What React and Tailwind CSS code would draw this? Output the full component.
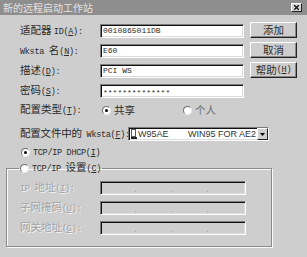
import React from "react";

const E = ({ children }) => <span className="font-['Liberation_Mono',monospace] text-[8.5px] tracking-[-0.3px]">{children}</span>;

function Sunken({ className = "", children }) {
  return (
    <div className={`border border-t-[#7c7c7c] border-l-[#7c7c7c] border-b-white border-r-white shadow-[inset_1px_1px_0_#111,inset_-1px_-1px_0_#dcdcdc] ${className}`}>
      {children}
    </div>
  );
}

function Btn({ children }) {
  return (
    <div className="w-[47px] h-[16px] flex items-center justify-center border border-t-white border-l-white border-b-[#222] border-r-[#222] shadow-[inset_-1px_-1px_0_#888] bg-[#cecece]">
      {children}
    </div>
  );
}

function Radio({ on }) {
  return (
    <span className="w-[9px] h-[9px] shrink-0 rounded-full bg-white border border-t-[#6e6e6e] border-l-[#6e6e6e] border-b-[#e8e8e8] border-r-[#e8e8e8] flex items-center justify-center">
      {on && <span className="w-[3px] h-[3px] rounded-full bg-black" />}
    </span>
  );
}

function Row({ label, children }) {
  return (
    <div className="flex items-center h-[14px]">
      <div className="w-[100px] pl-[20px] whitespace-nowrap">{label}</div>
      {children}
    </div>
  );
}

function IpBox() {
  return (
    <Sunken className="w-[146px] h-[14px] flex bg-[#cecece]">
      {[0, 1, 2, 3].map((i) => (
        <div key={i} className="flex-1 flex items-end justify-end pb-[2px] pr-[1px]">
          {i < 3 && <span className="w-[1px] h-[1px] bg-[#a8a8a8]" />}
        </div>
      ))}
    </Sunken>
  );
}

const dis = "text-[#a4a4a4] [text-shadow:1px_1px_0_#f4f4f4]";

export default function App() {
  return (
    <div className="w-[307px] h-[257px] bg-[#cecece] overflow-hidden font-['Noto_Sans_CJK_SC',sans-serif] text-[10.5px] text-[#2a2a2a] leading-none">
      {/* title bar */}
      <div className="h-[15px] bg-[#8e8e8e] flex items-center justify-between pl-[3px] pr-[5px] text-[#e4e4e4] text-[10px]">
        <span>新的远程启动工作站</span>
        <div className="w-[11px] h-[9px] flex items-center justify-center bg-[#d4d4d4] border border-t-white border-l-white border-b-[#222] border-r-[#222]">
          <svg width="5" height="5" viewBox="0 0 5 5">
            <path d="M0 0L5 5M5 0L0 5" stroke="#111" strokeWidth="1.3" />
          </svg>
        </div>
      </div>

      {/* top fields + buttons */}
      <div className="flex mt-[9px]">
        <div className="w-[250px] flex flex-col gap-[6px]">
          <Row label={<>适配器 <E>ID(<u>A</u>):</E></>}>
            <Sunken className="w-[144px] h-[14px] bg-white flex items-center pl-[2px]">
              <span className="font-['Liberation_Mono',monospace] text-[8px]">0010865011DB</span>
            </Sunken>
          </Row>
          <Row label={<><E>Wksta </E>名<E>(<u>N</u>):</E></>}>
            <Sunken className="w-[144px] h-[14px] bg-white flex items-center pl-[2px]">
              <span className="font-['Liberation_Mono',monospace] text-[8px]">E60</span>
            </Sunken>
          </Row>
          <Row label={<>描述<E>(<u>D</u>):</E></>}>
            <Sunken className="w-[144px] h-[14px] bg-white flex items-center pl-[2px]">
              <span className="font-['Liberation_Mono',monospace] text-[8px]">PCI WS</span>
            </Sunken>
          </Row>
          <Row label={<>密码<E>(<u>S</u>):</E></>}>
            <Sunken className="w-[144px] h-[14px] bg-white flex items-center pl-[2px]">
              <span className="font-['Liberation_Mono',monospace] text-[8px] pt-[3px]">**************</span>
            </Sunken>
          </Row>
        </div>
        <div className="flex flex-col gap-[4px] -mt-[2px]">
          <Btn>添加</Btn>
          <Btn>取消</Btn>
          <Btn>帮助<E>(<u>H</u>)</E></Btn>
        </div>
      </div>

      {/* config type */}
      <div className="flex items-center h-[14px] mt-[5px]">
        <div className="w-[102px] pl-[20px] whitespace-nowrap">配置类型<E>(<u>T</u>):</E></div>
        <Radio on />
        <span className="ml-[3px] w-[69px]">共享</span>
        <Radio />
        <span className="ml-[3px] text-[#6a6a6a]">个人</span>
      </div>

      {/* profile combo */}
      <div className="flex items-center h-[14px] mt-[10px]">
        <div className="w-[128px] pl-[20px] whitespace-nowrap tracking-[-0.2px]">配置文件中的<E> Wksta(<u>F</u>):</E></div>
        <Sunken className="w-[141px] h-[14px] bg-white flex items-center pl-[2px]">
          <svg width="6" height="10" viewBox="0 0 6 10" className="shrink-0">
            <rect x="0.5" y="0.5" width="4" height="7" fill="#fff" stroke="#555" />
            <rect x="0" y="8" width="6" height="2" fill="#222" />
          </svg>
          <div className="flex-1 flex justify-between items-center font-['Liberation_Sans',sans-serif] text-[9px] pl-[1px] pr-[1px] text-[#333]">
            <span>W95AE</span>
            <span>WIN95 FOR AE2</span>
          </div>
          <div className="w-[11px] h-[12px] flex items-center justify-center bg-[#d0d0d0] border border-t-white border-l-white border-b-[#222] border-r-[#222]">
            <svg width="5" height="3" viewBox="0 0 5 3">
              <path d="M0 0H5L2.5 3Z" fill="#000" />
            </svg>
          </div>
        </Sunken>
      </div>

      {/* DHCP */}
      <div className="flex items-center h-[14px] mt-[4px] pl-[21px]">
        <Radio on />
        <span className="ml-[3px] whitespace-nowrap"><E>TCP/IP DHCP(<u>I</u>)</E></span>
      </div>

      {/* TCP/IP settings group */}
      <fieldset className="ml-[6px] mt-[2px] w-[266px] h-[86px] border border-[#8a8a8a] shadow-[inset_1px_1px_0_#fafafa,1px_1px_0_#fafafa]">
        <legend className="ml-[12px] px-[1px] h-[14px] flex items-center">
          <Radio />
          <span className="ml-[3px] whitespace-nowrap"><E>TCP/IP </E>设置<E>(<u>C</u>)</E></span>
        </legend>
        <div className="flex flex-col gap-[6px] mt-[6px]">
          <div className="flex items-center h-[14px]">
            <div className={`w-[93px] pl-[13px] whitespace-nowrap ${dis}`}><E>IP </E>地址<E>(<u>I</u>):</E></div>
            <IpBox />
          </div>
          <div className="flex items-center h-[14px]">
            <div className={`w-[93px] pl-[13px] whitespace-nowrap ${dis}`}>子网掩码<E>(<u>U</u>):</E></div>
            <IpBox />
          </div>
          <div className="flex items-center h-[14px]">
            <div className={`w-[93px] pl-[13px] whitespace-nowrap ${dis}`}>网关地址<E>(<u>G</u>):</E></div>
            <IpBox />
          </div>
        </div>
      </fieldset>
    </div>
  );
}
